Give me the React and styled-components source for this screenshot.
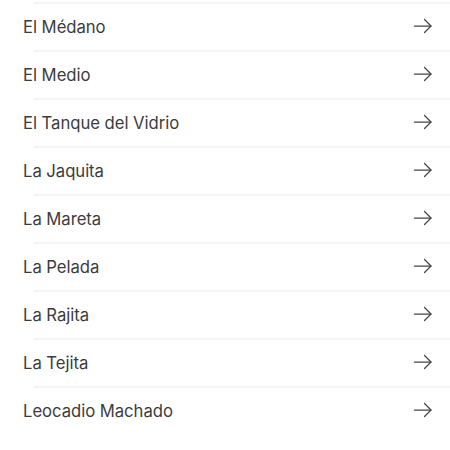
import React from "react";
import styled, { createGlobalStyle } from "styled-components";

const GlobalStyle = createGlobalStyle`
  body {
    margin: 0;
    background: #ffffff;
    font-family: Inter, "Liberation Sans", sans-serif;
  }
`;

const List = styled.ul`
  list-style: none;
  margin: 0;
  padding: 2px 0 0;
`;

const Row = styled.li`
  display: flex;
  align-items: center;
  justify-content: space-between;
  height: 48px;
  padding: 0 17px 0 23px;
  box-sizing: border-box;
  position: relative;

  &::before {
    content: "";
    position: absolute;
    top: 0;
    left: 34px;
    right: 0;
    height: 2px;
    background: #f4f4f4;
  }

  &:last-child::after {
    content: "";
    position: absolute;
    bottom: -2px;
    left: 34px;
    right: 0;
    height: 2px;
    background: #f7f7f7;
  }
`;

const Name = styled.span`
  font-size: 16.7px;
  color: #3c3c3c;
  letter-spacing: -0.05px;
  padding-top: 2px;
`;

const Arrow = () => (
  <svg width="20" height="16" viewBox="0 0 20 16" fill="none" stroke="#454545" strokeWidth="1.25" strokeLinecap="round" strokeLinejoin="round">
    <path d="M1.5 8H18" />
    <path d="M11.5 1.5L18 8l-6.5 6.5" />
  </svg>
);

const places = [
  "El Médano",
  "El Medio",
  "El Tanque del Vidrio",
  "La Jaquita",
  "La Mareta",
  "La Pelada",
  "La Rajita",
  "La Tejita",
  "Leocadio Machado",
];

export default function App() {
  return (
    <>
      <GlobalStyle />
      <List>
        {places.map((p) => (
          <Row key={p}>
            <Name>{p}</Name>
            <Arrow />
          </Row>
        ))}
      </List>
    </>
  );
}
